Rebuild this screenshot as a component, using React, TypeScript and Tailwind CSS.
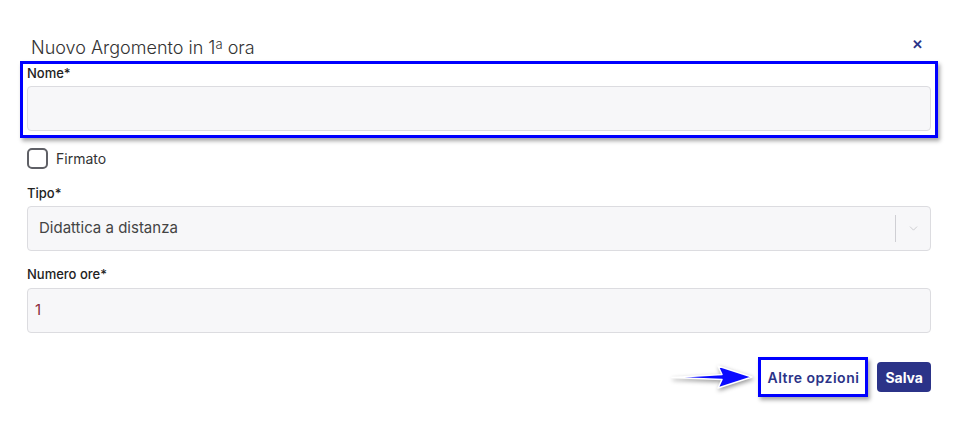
import { ChevronDown } from "lucide-react";

const font = { fontFamily: "Inter, 'Noto Sans', sans-serif" };

function Label({ children }: { children: React.ReactNode }) {
  return <p className="text-[13px] leading-4 font-medium text-[#222]">{children}</p>;
}

export default function App() {
  return (
    <div className="h-[435px] w-[958px] bg-white" style={font}>
      <div className="px-[27px] pt-[36px]">
        <div className="flex items-start justify-between pl-1">
          <h2 className="text-[18px] leading-6 font-light text-[#333]">
            Nuovo Argomento in 1<span className="relative -top-[5px] text-[13px]">a</span> ora
          </h2>
          <button className="mr-[8px] mt-[2px] text-[13px] font-bold leading-none text-[#2b3388]">✕</button>
        </div>

        {/* campo evidenziato */}
        <div className="-mx-[7px] border-[3px] border-[#0000ff] px-[4px] pb-[4px] pt-[1px] shadow-[2px_3px_4px_rgba(0,0,0,0.35)]">
          <Label>Nome*</Label>
          <div className="mt-[5px] h-[45px] rounded border border-[#dcdce0] bg-[#f7f7f9]" />
        </div>

        <label className="mt-[10px] flex items-center gap-[8px]">
          <span className="h-[21px] w-[21px] rounded-[5px] border-2 border-[#5f6066]" />
          <span className="text-[14px] text-[#333]">Firmato</span>
        </label>

        <div className="mt-[16px]">
          <Label>Tipo*</Label>
          <div className="mt-[5px] flex h-[45px] items-center rounded border border-[#dcdce0] bg-[#f7f7f9]">
            <span className="flex-1 pl-[11px] text-[15px] text-[#444]">Didattica a distanza</span>
            <span className="h-[27px] w-px bg-[#cfcfd4]" />
            <span className="flex w-[34px] justify-center">
              <ChevronDown size={13} strokeWidth={1.5} className="text-[#c4c4c8]" />
            </span>
          </div>
        </div>

        <div className="mt-[15px]">
          <Label>Numero ore*</Label>
          <div className="mt-[6px] flex h-[45px] items-center rounded border border-[#dcdce0] bg-[#f7f7f9] pl-[7px]">
            <span className="text-[15px] text-[#8b2c3c]">1</span>
          </div>
        </div>

        <div className="mt-[24px] flex items-center justify-end">
          <svg width="86" height="28" viewBox="0 0 86 28" className="mr-[2px] drop-shadow-[1px_2px_2px_rgba(0,0,0,0.4)]">
            <path
              d="M2 14.5 L52 11.5 L48 3 L82 14 L48 25 L52 16.5 Z"
              fill="#0a0aff"
              stroke="#ffffff"
              strokeWidth="1.5"
              strokeLinejoin="round"
            />
          </svg>
          <div className="border-[3px] border-[#0000ff] px-[6px] py-[5px] shadow-[2px_3px_4px_rgba(0,0,0,0.35)]">
            <span className="text-[14px] font-semibold tracking-[0.5px] text-[#2b3388]">Altre opzioni</span>
          </div>
          <button className="ml-[9px] h-[30px] rounded bg-[#2b3388] px-[8px] text-[14px] font-bold text-white">
            Salva
          </button>
        </div>
      </div>
    </div>
  );
}
